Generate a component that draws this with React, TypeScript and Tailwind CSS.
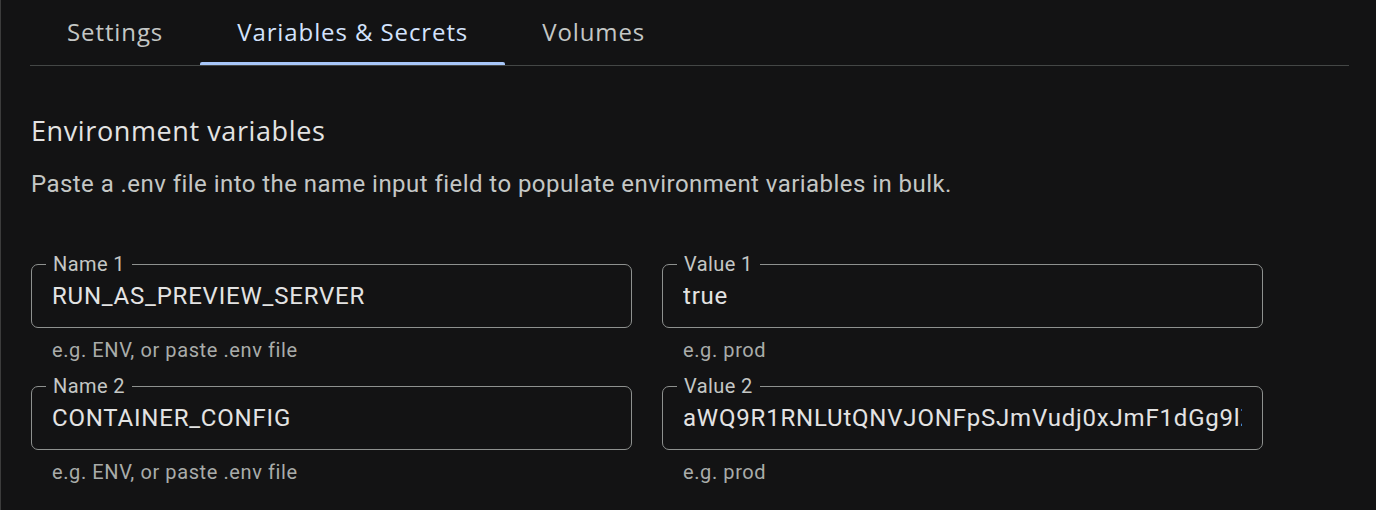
import React from "react";

const body = { fontFamily: "Roboto, 'Liberation Sans', sans-serif" };
const title = { fontFamily: "'Open Sans', 'Noto Sans', sans-serif" };

function Field({ label, value, helper }: { label: string; value: string; helper: string }) {
  return (
    <div className="flex flex-col">
      <div className="relative h-[64px] rounded-[7px] border border-[#8e918f] flex items-center pl-[20px] pr-[20px]">
        <span className="absolute -top-[14px] left-[14px] bg-[#131314] px-[7px] text-[20px] leading-[26px] tracking-[0.4px] text-[#c4c7c5]">
          {label}
        </span>
        <div className="overflow-hidden whitespace-nowrap text-[24px] leading-[30px] tracking-[0.8px] text-[#e3e3e3] w-full">
          {value}
        </div>
      </div>
      <div className="mt-[10px] pl-[21px] text-[20px] leading-[24px] tracking-[0.6px] text-[#a9acaa]">{helper}</div>
    </div>
  );
}

export default function App() {
  return (
    <div className="w-[1376px] h-[510px] overflow-hidden bg-[#131314] border-l border-[#3c3c3c]" style={body}>
      <div className="ml-[29px] mr-[27px] h-[66px] flex border-b border-[#444746]" style={title}>
        <div className="px-[37px] pb-[2px] flex items-center text-[24px] font-medium tracking-[0.9px] text-[#c4c7c5]">Settings</div>
        <div className="relative px-[37px] pb-[2px] flex items-center text-[24px] font-medium tracking-[0.9px] text-[#d3e3fd]">
          Variables &amp; Secrets
          <div className="absolute left-0 right-0 bottom-0 h-[3px] rounded-t-[2px] bg-[#a8c7fa]" />
        </div>
        <div className="px-[37px] pb-[2px] flex items-center text-[24px] font-medium tracking-[0.9px] text-[#c4c7c5]">Volumes</div>
      </div>
      <div className="pl-[30px]">
        <h2 className="mt-[48px] text-[27px] leading-[34px] tracking-[0.6px] text-[#e3e3e3]" style={title}>
          Environment variables
        </h2>
        <p className="mt-[21px] text-[24px] leading-[30px] tracking-[0.45px] text-[#c4c7c5]">
          Paste a .env file into the name input field to populate environment variables in bulk.
        </p>
        <div className="mt-[65px] grid grid-cols-[601px_601px] gap-x-[30px] gap-y-[24px]">
          <Field label="Name 1" value="RUN_AS_PREVIEW_SERVER" helper="e.g. ENV, or paste .env file" />
          <Field label="Value 1" value="true" helper="e.g. prod" />
          <Field label="Name 2" value="CONTAINER_CONFIG" helper="e.g. ENV, or paste .env file" />
          <Field label="Value 2" value="aWQ9R1RNLUtQNVJONFpSJmVudj0xJmF1dGg9lZmFsc2UmZGVidWc9MQ==" helper="e.g. prod" />
        </div>
      </div>
    </div>
  );
}
